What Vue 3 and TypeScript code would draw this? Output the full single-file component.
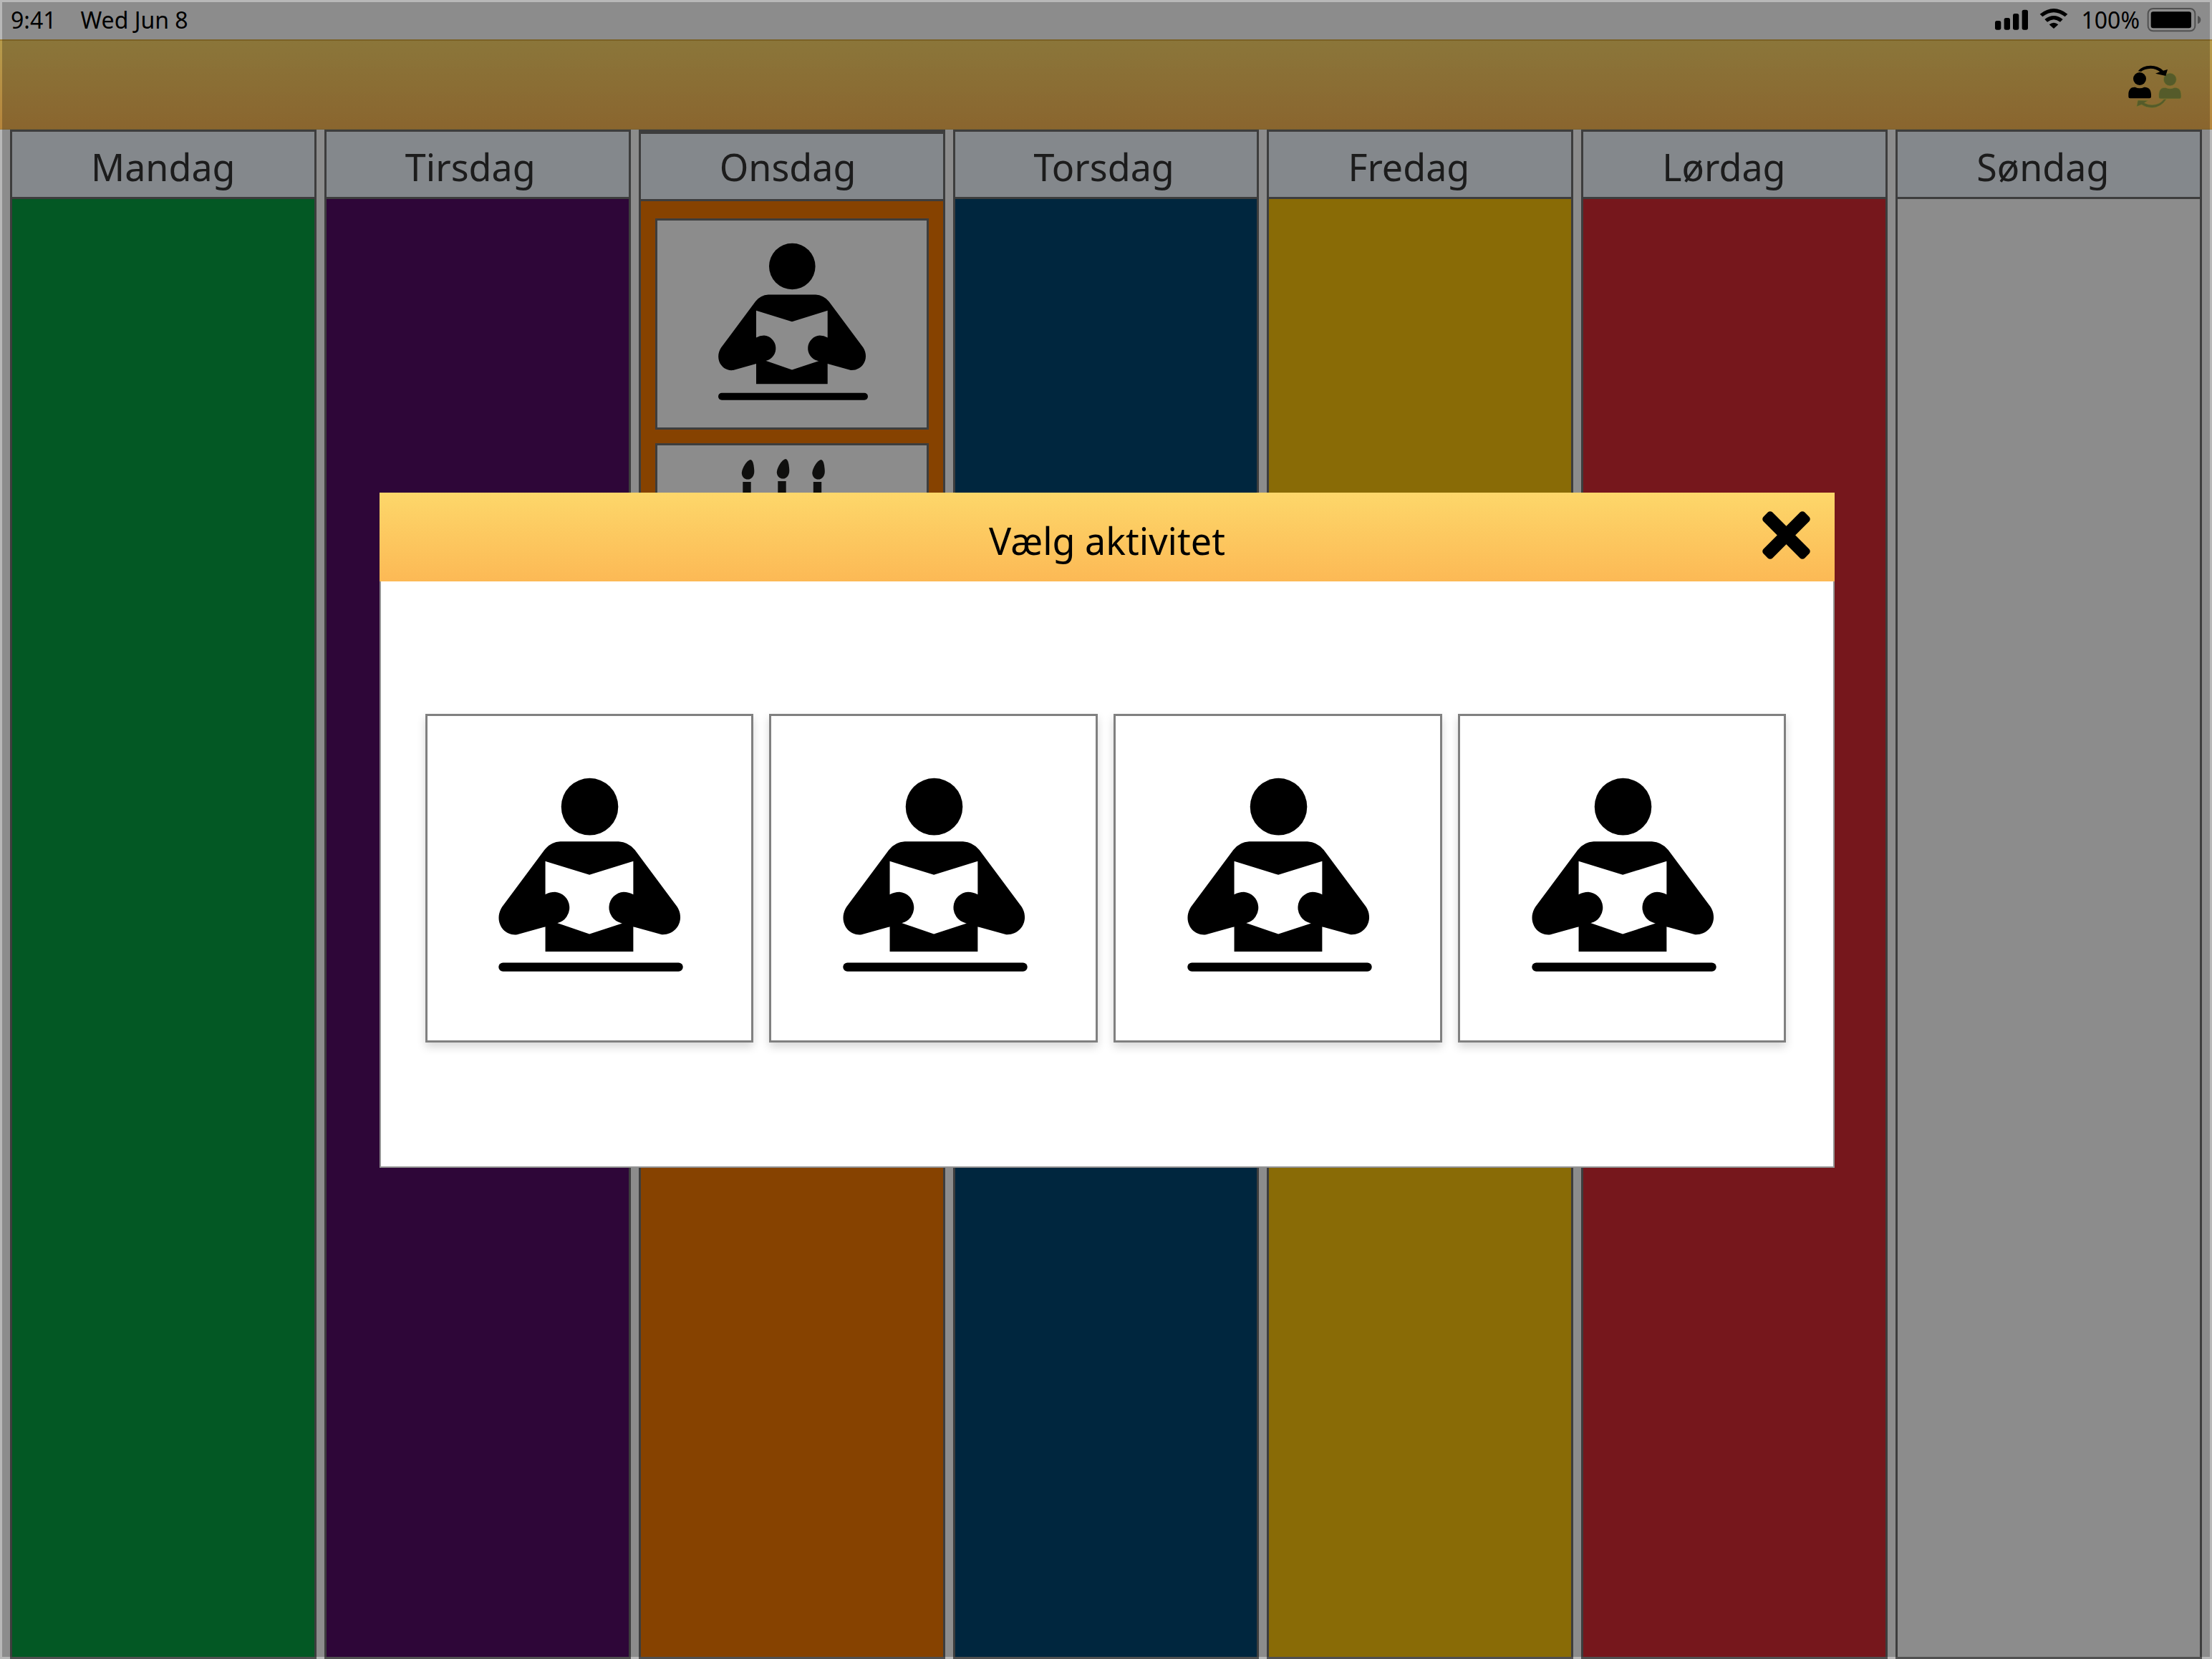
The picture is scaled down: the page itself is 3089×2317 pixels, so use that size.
<script setup lang="ts">
import { ref } from 'vue'

interface Day {
  name: string
  tone: string
  today?: boolean
  activities: string[]
}

const days: Day[] = [
  { name: 'Mandag', tone: 'green', activities: [] },
  { name: 'Tirsdag', tone: 'purple', activities: [] },
  { name: 'Onsdag', tone: 'orange', today: true, activities: ['read', 'cake'] },
  { name: 'Torsdag', tone: 'blue', activities: [] },
  { name: 'Fredag', tone: 'yellow', activities: [] },
  { name: 'Lørdag', tone: 'red', activities: [] },
  { name: 'Søndag', tone: 'white', activities: [] },
]

const choices = [1, 2, 3, 4]
const open = ref(true)
</script>

<template>
  <div class="screen">
    <svg class="defs" width="0" height="0" aria-hidden="true">
      <symbol id="reader" viewBox="143 179 209 220">
        <circle cx="246.300" cy="212" r="32.300" />
        <path
          fill-rule="evenodd"
          d="M213 251.500H279Q290 252 297.500 261L345.500 325.500C355 341 344 358 328 357L295.700 348V376.200H196V348L164 357C148 359 137 341 147 325.500L195 261Q202 252 213 251.500Z
             M196 273.800V348L207 343L246 356.400L287 343L295.700 348V273.800L246 289.300Z"
        />
        <path d="M186 311.500H196Q201 308.600 207 308.600A17.700 17.900 0 0 1 210 343.800L200 348H186Z" />
        <path d="M306 311.500H295.700Q290.500 308.600 284.700 308.600A17.700 17.900 0 0 0 281.500 343.800L292 348H306Z" />
        <rect x="143" y="388.800" width="209" height="10" rx="5" />
      </symbol>
      <symbol id="cake" viewBox="143 481 209 243">
        <g id="candle">
          <path d="M188 482C192 482 193 492 193.300 498C193.500 505 189 509.600 184.500 509.600C179 509.600 175.500 505 175.800 500C176.500 493 183 483 188 482Z" />
          <rect x="177.300" y="513" width="11.400" height="60" />
        </g>
        <use href="#candle" x="49" y="-1" />
        <use href="#candle" x="98.500" />
        <path d="M165 573H305Q320 573 320 588V690H150V588Q150 573 165 573ZM143 700H328V716H143Z" />
      </symbol>
    </svg>

    <header class="status">
      <span class="time">9:41</span>
      <span class="date">Wed Jun 8</span>
      <svg class="signal" viewBox="138 30 138 105" aria-hidden="true">
        <rect x="138" y="87" width="25" height="38" rx="8" />
        <rect x="176" y="75" width="25" height="50" rx="8" />
        <rect x="213" y="57" width="25" height="68" rx="8" />
        <rect x="251" y="41" width="25" height="84" rx="8" />
      </svg>
      <svg class="wifi" viewBox="324 30 120 105" aria-hidden="true">
        <path d="M326 59Q384 13 442 59L431 70Q384 33 337 70Z" />
        <path d="M346 81Q384 51 422 81L411 92Q384 71 357 92Z" />
        <path d="M365 103Q384 88 403 103L384 120Z" />
      </svg>
      <span class="percent">100%</span>
      <svg class="battery" viewBox="774 30 228 105" aria-hidden="true">
        <rect x="779" y="36" width="197" height="94" rx="21" fill="none" stroke="#949494" stroke-width="6" />
        <rect x="791" y="49" width="169" height="69" rx="10" />
        <path d="M987 66Q1000 71 1000 83T987 100Z" fill="#949494" />
      </svg>
    </header>

    <nav class="toolbar">
      <button class="swap" type="button" aria-label="Skift bruger">
        <svg viewBox="690 265 234 195">
          <g class="ghost">
            <circle cx="871" cy="331" r="27" />
            <path d="M824 405V396C824 373 836 364 852 365Q871 374 890 365C907 364 918 374 918 397V405Q918 412 911 412H831Q824 412 824 405Z" />
            <path d="M846 413H857Q832 450 796 450Q771 450 752 437L731 445L736 418L780 419L764 429Q779 437 796 437Q828 437 846 413Z" />
          </g>
          <circle cx="744" cy="328" r="27" />
          <path d="M697 403V394C697 371 709 362 725 363Q744 372 763 363C780 362 792 372 792 395V403Q792 410 785 410H704Q697 410 697 403Z" />
          <path d="M737 296Q754 273 790 273Q821 273 843 294L861 289L853 316L810 306L829 299Q813 285 790 285Q764 286 750 298Z" />
        </svg>
      </button>
    </nav>

    <main class="week">
      <section v-for="day in days" :key="day.name" class="day" :class="[day.tone, { today: day.today }]">
        <h2 class="day-name">{{ day.name }}</h2>
        <div class="activities">
          <div v-for="activity in day.activities" :key="activity" class="activity">
            <svg :class="activity" aria-hidden="true"><use :href="activity === 'read' ? '#reader' : '#cake'" /></svg>
          </div>
        </div>
      </section>
    </main>

    <div v-if="open" class="backdrop">
      <div class="dialog" role="dialog" aria-labelledby="dialog-title">
        <div class="dialog-head">
          <h1 id="dialog-title" class="dialog-title">Vælg aktivitet</h1>
          <button class="close" type="button" aria-label="Luk" @click="open = false">
            <svg viewBox="-101 -101 202 202">
              <rect x="-123" y="-27" width="246" height="54" rx="14" transform="rotate(45)" />
              <rect x="-123" y="-27" width="246" height="54" rx="14" transform="rotate(-45)" />
            </svg>
          </button>
        </div>
        <div class="choices">
          <button v-for="n in choices" :key="n" class="choice" type="button" aria-label="Læsning">
            <svg><use href="#reader" /></svg>
          </button>
        </div>
      </div>
    </div>
  </div>
</template>

<style>
body {
  margin: 0;
}
</style>

<style scoped>
.screen {
  position: relative;
  display: flex;
  flex-direction: column;
  min-height: 100vh;
  background: #fff;
  color: #000;
  font-family: "Noto Sans", "Open Sans", sans-serif;
}

.defs {
  position: absolute;
}

svg {
  display: block;
}

button {
  margin: 0;
  padding: 0;
  border: 0;
  background: none;
  color: inherit;
  cursor: pointer;
}

.status {
  display: flex;
  align-items: center;
  height: 55px;
  padding: 0 15px;
  font-size: 32px;
  line-height: 55px;
}

.date {
  margin-left: 34px;
}

.signal {
  width: 46px;
  height: 35px;
  margin-left: auto;
}

.wifi {
  width: 40px;
  height: 35px;
  margin-left: 16px;
}

.percent {
  margin-left: 18px;
}

.battery {
  width: 76px;
  height: 35px;
  margin-left: 10px;
}

.toolbar {
  box-sizing: border-box;
  display: flex;
  align-items: center;
  justify-content: flex-end;
  height: 126px;
  padding: 6px 41px 0 0;
  border-top: 2px solid #e0b146;
  border-bottom: 1px solid #deb25c;
  background: linear-gradient(#fdd76a, #fcb955);
}

.swap svg {
  width: 78px;
  height: 65px;
}

.ghost {
  fill: #9ca74e;
  stroke: #ecd44e;
  stroke-width: 2;
}

.week {
  flex: 1;
  display: flex;
  gap: 11px;
  padding: 0 14px;
}

.day {
  flex: 1 1 0;
  display: flex;
  flex-direction: column;
  border: 3px solid #707070;
}

.day-name {
  height: 84px;
  margin: 0;
  padding: 7px 0 0 110px;
  border-bottom: 3px solid #707070;
  background: #f0f7ff;
  color: #333;
  font-size: 52px;
  font-weight: 400;
  line-height: 84px;
}

.today .day-name {
  height: 87px;
  padding-top: 4px;
  border-top: 3px solid #707070;
}

.activities {
  display: flex;
  flex-direction: column;
  gap: 19px;
  padding: 24px 20px;
}

.activity {
  box-sizing: border-box;
  display: flex;
  align-items: center;
  justify-content: center;
  height: 295px;
  padding: 0 0 8px 4px;
  border: 3px solid #707070;
  background: #fff;
}

.read {
  width: 209px;
  height: 220px;
}

.cake {
  width: 209px;
  height: 243px;
  fill: #1c1c1a;
}

.green { background: #07a043; }
.purple { background: #550b67; }
.orange { background: #f47800; }
.blue { background: #004571; }
.yellow { background: #fac30b; }
.red { background: #d72a33; }
.white { background: #fff; }

.backdrop {
  position: absolute;
  inset: 0;
  display: flex;
  align-items: center;
  justify-content: center;
  padding: 2px 0 0 3px;
  border: 3px solid rgba(0, 0, 0, 0.28);
  background: rgba(0, 0, 0, 0.45);
  background-clip: padding-box;
}

.dialog {
  width: 66%;
  background: #fff;
}

.dialog-head {
  display: grid;
  grid-template-columns: 101px 1fr 101px;
  align-items: center;
  height: 124px;
  background: linear-gradient(#fdd76a, #fcb955);
}

.dialog-title {
  grid-column: 2;
  margin: 0;
  padding-top: 10px;
  font-size: 52px;
  font-weight: 400;
  line-height: 72px;
  text-align: center;
}

.close svg {
  width: 67px;
  height: 67px;
  margin-bottom: 6px;
}

.choices {
  display: flex;
  gap: 22px;
  padding: 185px 66px 173px 62px;
  border: 2px solid #939393;
  border-top: 0;
}

.choice {
  box-sizing: border-box;
  flex: 1 1 0;
  display: flex;
  align-items: center;
  justify-content: center;
  aspect-ratio: 1;
  padding: 0 0 10px 5px;
  border: 3px solid #808080;
  background: #fff;
  box-shadow: 0 6px 12px rgba(0, 0, 0, 0.16);
}

.choice svg {
  width: 258px;
  height: 271px;
}
</style>
